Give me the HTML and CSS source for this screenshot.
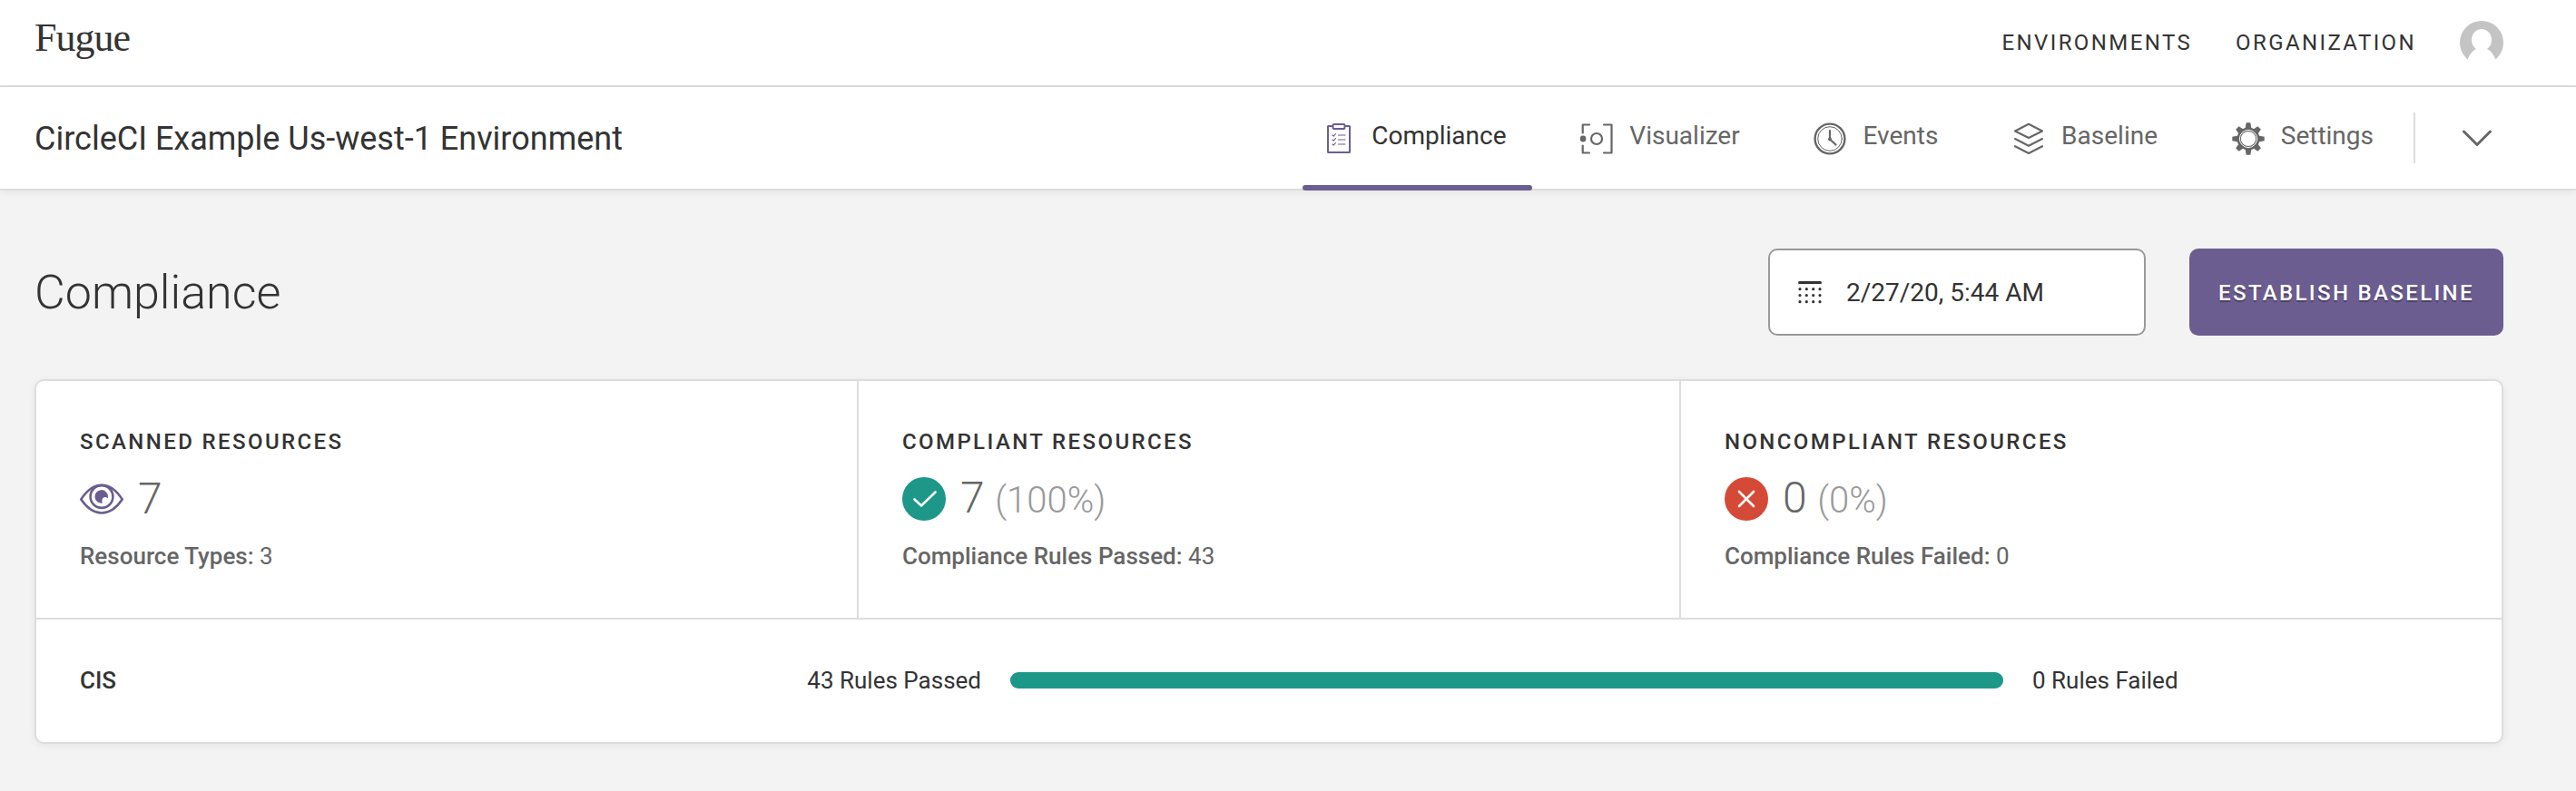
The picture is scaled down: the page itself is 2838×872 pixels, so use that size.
FILE: index.html
```html
<!DOCTYPE html>
<html lang="en">
<head>
<meta charset="utf-8">
<title>Fugue - Compliance</title>
<link rel="stylesheet" href="styles.css">
</head>
<body>
<header class="topbar">
  <a class="logo">Fugue</a>
  <nav class="topnav">
    <a>ENVIRONMENTS</a>
    <a>ORGANIZATION</a>
    <svg class="avatar" width="48" height="48" viewBox="0 0 48 48">
      <circle cx="24" cy="24" r="24" fill="#c4c4c4"/>
      <ellipse cx="24" cy="21" rx="11" ry="12" fill="#fff"/>
      <path d="M7 48C9 38 15 31.500 19 30.500h10C33 31.500 39 38 41 48z" fill="#fff"/>
    </svg>
  </nav>
</header>

<div class="envbar">
  <h1 class="env-name">CircleCI Example Us-west-1 Environment</h1>
  <nav class="tabs">
    <a class="tab tab-active">
      <svg class="tab-icon" width="36" height="36" viewBox="0 0 36 36" fill="none" stroke="#6b5d90" stroke-linejoin="round" stroke-linecap="round">
        <path d="M11 4H6.500Q6 4 6 4.500V32.500Q6 33 6.500 33H29.500Q30 33 30 32.500V4.500Q30 4 29.500 4H25" stroke-width="2"/>
        <rect x="11.500" y="2" width="13" height="5" rx="1" stroke-width="2"/>
        <path d="M11 14l1.200 1.200L14.500 12.500M11 19l1.200 1.200L14.500 17.500M11 24l1.200 1.200L14.500 22.500M17.500 14H25M17.500 19H25M17.500 24H25" stroke-width="1.100"/>
      </svg>
      <span>Compliance</span>
    </a>
    <a class="tab">
      <svg class="tab-icon" width="36" height="36" viewBox="0 0 36 36" fill="none" stroke="#666" stroke-width="2.200" stroke-linecap="round" stroke-linejoin="round">
        <path d="M10 2.500H2.700V11.500M2.700 25.500V33.500H10M26 2.500H34.500V33.500H26"/>
        <circle cx="18" cy="18" r="6"/>
        <circle cx="3" cy="18" r="3.400" fill="#666" stroke="none"/>
      </svg>
      <span>Visualizer</span>
    </a>
    <a class="tab">
      <svg class="tab-icon" width="36" height="36" viewBox="0 0 36 36" fill="none" stroke="#666" stroke-linecap="round">
        <circle cx="18" cy="18" r="16.400" stroke-width="2.400"/>
        <circle cx="18" cy="18" r="13.300" stroke-width="1"/>
        <path d="M18 9V18.500L24.500 24.500" stroke-width="2.200" stroke-linejoin="round"/>
        <circle cx="18" cy="18.500" r="2" fill="#666" stroke="none"/>
      </svg>
      <span>Events</span>
    </a>
    <a class="tab">
      <svg class="tab-icon" width="36" height="36" viewBox="0 0 36 36" fill="none" stroke="#666" stroke-width="2.100" stroke-linecap="round" stroke-linejoin="round">
        <path d="M18 1.800L33 9.500L18 17L3 9.500Z"/>
        <path d="M3 18L18 25.800L33 18M3 26.200L18 34L33 26.200"/>
      </svg>
      <span>Baseline</span>
    </a>
    <a class="tab">
      <svg class="tab-icon" width="36" height="36" viewBox="0 0 36 36">
        <g fill="#666">
          <circle cx="18" cy="18" r="12.500"/>
          <path d="M14.500 7L15.700 0.300H20.300L21.500 7ZM14.500 29L15.700 35.700H20.300L21.500 29Z"/>
          <path d="M7 14.500L0.300 15.700V20.300L7 21.500ZM29 14.500L35.700 15.700V20.300L29 21.500Z"/>
          <path transform="rotate(45 18 18)" d="M14.500 7L15.500 0.900H20.500L21.500 7ZM14.500 29L15.500 35.100H20.500L21.500 29ZM7 14.500L0.900 15.500V20.500L7 21.500ZM29 14.500L35.100 15.500V20.500L29 21.500Z"/>
        </g>
        <circle cx="18" cy="18" r="9.600" fill="#666" stroke="#fff" stroke-width="1"/>
        <circle cx="18" cy="18" r="8.100" fill="#fff"/>
      </svg>
      <span>Settings</span>
    </a>
  </nav>
  <span class="bar-divider"></span>
  <svg class="chevron" width="34" height="20" viewBox="0 0 34 20" fill="none" stroke="#666" stroke-width="3" stroke-linecap="round" stroke-linejoin="round"><path d="M2.500 2L17 16.500L31.500 2"/></svg>
</div>

<main class="page">
  <div class="page-head">
    <h2 class="page-title">Compliance</h2>
    <div class="date-field">
      <svg width="26" height="28" viewBox="0 0 26 28" stroke="#333" fill="none" stroke-linecap="round">
        <path d="M1.500 3.500H24.500" stroke-width="3"/>
        <path d="M2 10.700h0M9.300 10.700h0M16.700 10.700h0M24 10.700h0M2 17.600h0M9.300 17.600h0M16.700 17.600h0M24 17.600h0M2 24.700h0M9.300 24.700h0M16.700 24.700h0M24 24.700h0" stroke-width="3.200"/>
      </svg>
      <span>2/27/20, 5:44 AM</span>
    </div>
    <button class="baseline-button">ESTABLISH BASELINE</button>
  </div>

  <section class="card">
    <div class="stats">
      <div class="stat">
        <h3 class="stat-label">SCANNED RESOURCES</h3>
        <div class="stat-value">
          <svg width="48" height="48" viewBox="0 0 48 48" fill="none" stroke="#6b5d90" stroke-width="2.600" stroke-linejoin="round">
            <path d="M1.300 24.500C15 3.500 33 3.500 46.700 24.500C33 44.500 15 44.500 1.300 24.500Z"/>
            <circle cx="24" cy="21.500" r="12.400"/>
            <path d="M31 21.500A7.300 7.300 0 1 0 25 28.600Q23.500 25 25.500 23Q28 21 31 23.500Z" fill="#6b5d90" stroke="none"/>
          </svg>
          <span>7</span>
        </div>
        <p class="stat-note"><b>Resource Types:</b> 3</p>
      </div>
      <div class="stat">
        <h3 class="stat-label">COMPLIANT RESOURCES</h3>
        <div class="stat-value">
          <svg width="48" height="48" viewBox="0 0 48 48"><circle cx="24" cy="24" r="24" fill="#1c9788"/><path d="M13.500 24.500L21 31.500L36.500 16.500" fill="none" stroke="#fff" stroke-width="2.600" stroke-linecap="round" stroke-linejoin="round"/></svg>
          <span>7 <small>(100%)</small></span>
        </div>
        <p class="stat-note"><b>Compliance Rules Passed:</b> 43</p>
      </div>
      <div class="stat">
        <h3 class="stat-label">NONCOMPLIANT RESOURCES</h3>
        <div class="stat-value">
          <svg width="48" height="48" viewBox="0 0 48 48"><circle cx="24" cy="24" r="24" fill="#d54937"/><path d="M16 16L32 32M32 16L16 32" fill="none" stroke="#fff" stroke-width="2.600" stroke-linecap="round"/></svg>
          <span>0 <small>(0%)</small></span>
        </div>
        <p class="stat-note"><b>Compliance Rules Failed:</b> 0</p>
      </div>
    </div>
    <div class="family">
      <span class="family-name">CIS</span>
      <span class="passed">43 Rules Passed</span>
      <span class="bar"><span class="bar-fill" style="width:100%"></span></span>
      <span class="failed">0 Rules Failed</span>
    </div>
  </section>
</main>
</body>
</html>
```
FILE: styles.css
```css
* { box-sizing: border-box; }
body {
  margin: 0;
  min-height: 872px;
  background: #f3f3f3;
  color: #333;
  font-family: Roboto, "Liberation Sans", sans-serif;
  font-size: 26px;
}
h1, h2, h3, p { margin: 0; font-weight: 400; }
svg { display: block; flex: none; }

.topbar {
  display: flex;
  justify-content: space-between;
  height: 96px;
  padding: 0 80px 0 38px;
  background: #fff;
  border-bottom: 2px solid #ddd;
}
.logo {
  padding-top: 17px;
  font: 44px/50px "Liberation Serif", serif;
  letter-spacing: -1px;
}
.topnav {
  display: flex;
  align-items: center;
  gap: 48px;
  font-size: 24px;
  letter-spacing: 0.1em;
}

.envbar {
  display: flex;
  height: 114px;
  padding: 0 80px 0 38px;
  background: #fff;
  border-bottom: 2px solid #ddd;
  box-shadow: 0 2px 8px rgba(0, 0, 0, 0.06);
}
.env-name { flex: 1; font-size: 36px; line-height: 42px; padding-top: 36px; }
.tabs { display: flex; gap: 31.75px; }
.tab {
  display: flex;
  gap: 18px;
  height: 114px;
  padding: 38px 28px 0 22px;
  font-size: 28px;
  line-height: 32px;
  color: #666;
}
.tab-icon { margin-top: 1px; }
.tab-active { position: relative; color: #333; }
.tab-active::after {
  content: "";
  position: absolute;
  inset: auto 0 0;
  height: 6px;
  border-radius: 3px;
  background: #6b5d90;
}
.bar-divider { width: 2px; height: 56px; margin: 28px 51px 0 16px; background: #ddd; }
.chevron { margin: 47px 12px 0 0; }

.page { padding: 64px 80px 0 38px; }
.page-head { display: flex; gap: 48px; height: 96px; }
.page-title { flex: 1; font-size: 52px; font-weight: 300; line-height: 97px; }
.date-field {
  display: flex;
  align-items: center;
  gap: 27px;
  width: 416px;
  padding-left: 31px;
  border: 2px solid #999;
  border-radius: 10px;
  background: #fff;
  font-size: 28px;
}
.baseline-button {
  width: 346px;
  padding: 2px 0 0;
  border: 0;
  border-radius: 10px;
  background: #6b5d90;
  color: #fff;
  font: 500 24px Roboto, sans-serif;
  letter-spacing: 0.098em;
  white-space: nowrap;
  text-shadow: 0 2px 1px rgba(0, 0, 0, 0.3);
}

.card {
  height: 402px;
  margin-top: 48px;
  border: 2px solid #ddd;
  border-radius: 10px;
  background: #fff;
  box-shadow: 0 2px 8px rgba(0, 0, 0, 0.06);
}
.stats { display: grid; grid-template-columns: 906px 906px 1fr; height: 263px; border-bottom: 2px solid #ddd; }
.stat { padding: 53px 48px 0; }
.stat + .stat { box-shadow: -2px 0 #ddd; }
.stat-label { font-size: 24px; line-height: 28px; font-weight: 500; letter-spacing: 0.1em; }
.stat-value {
  display: flex;
  align-items: center;
  gap: 16px;
  height: 56px;
  margin-top: 21px;
  font-size: 48px;
  line-height: 56px;
  font-weight: 300;
  color: #666;
}
.stat-value small { font-size: 40px; color: #999; }
.stat-note { margin-top: 20px; line-height: 30px; color: #666; }
.stat-note b { font-weight: 500; }

.family {
  display: grid;
  grid-template-columns: 1fr auto 1094px 471px;
  column-gap: 32px;
  align-items: center;
  height: 134px;
  padding: 0 46px 0 48px;
}
.family-name { font-weight: 500; }
.bar { height: 18px; border-radius: 9px; background: #ddd; }
.bar-fill { display: block; height: 100%; border-radius: 9px; background: #1c9788; }
```
